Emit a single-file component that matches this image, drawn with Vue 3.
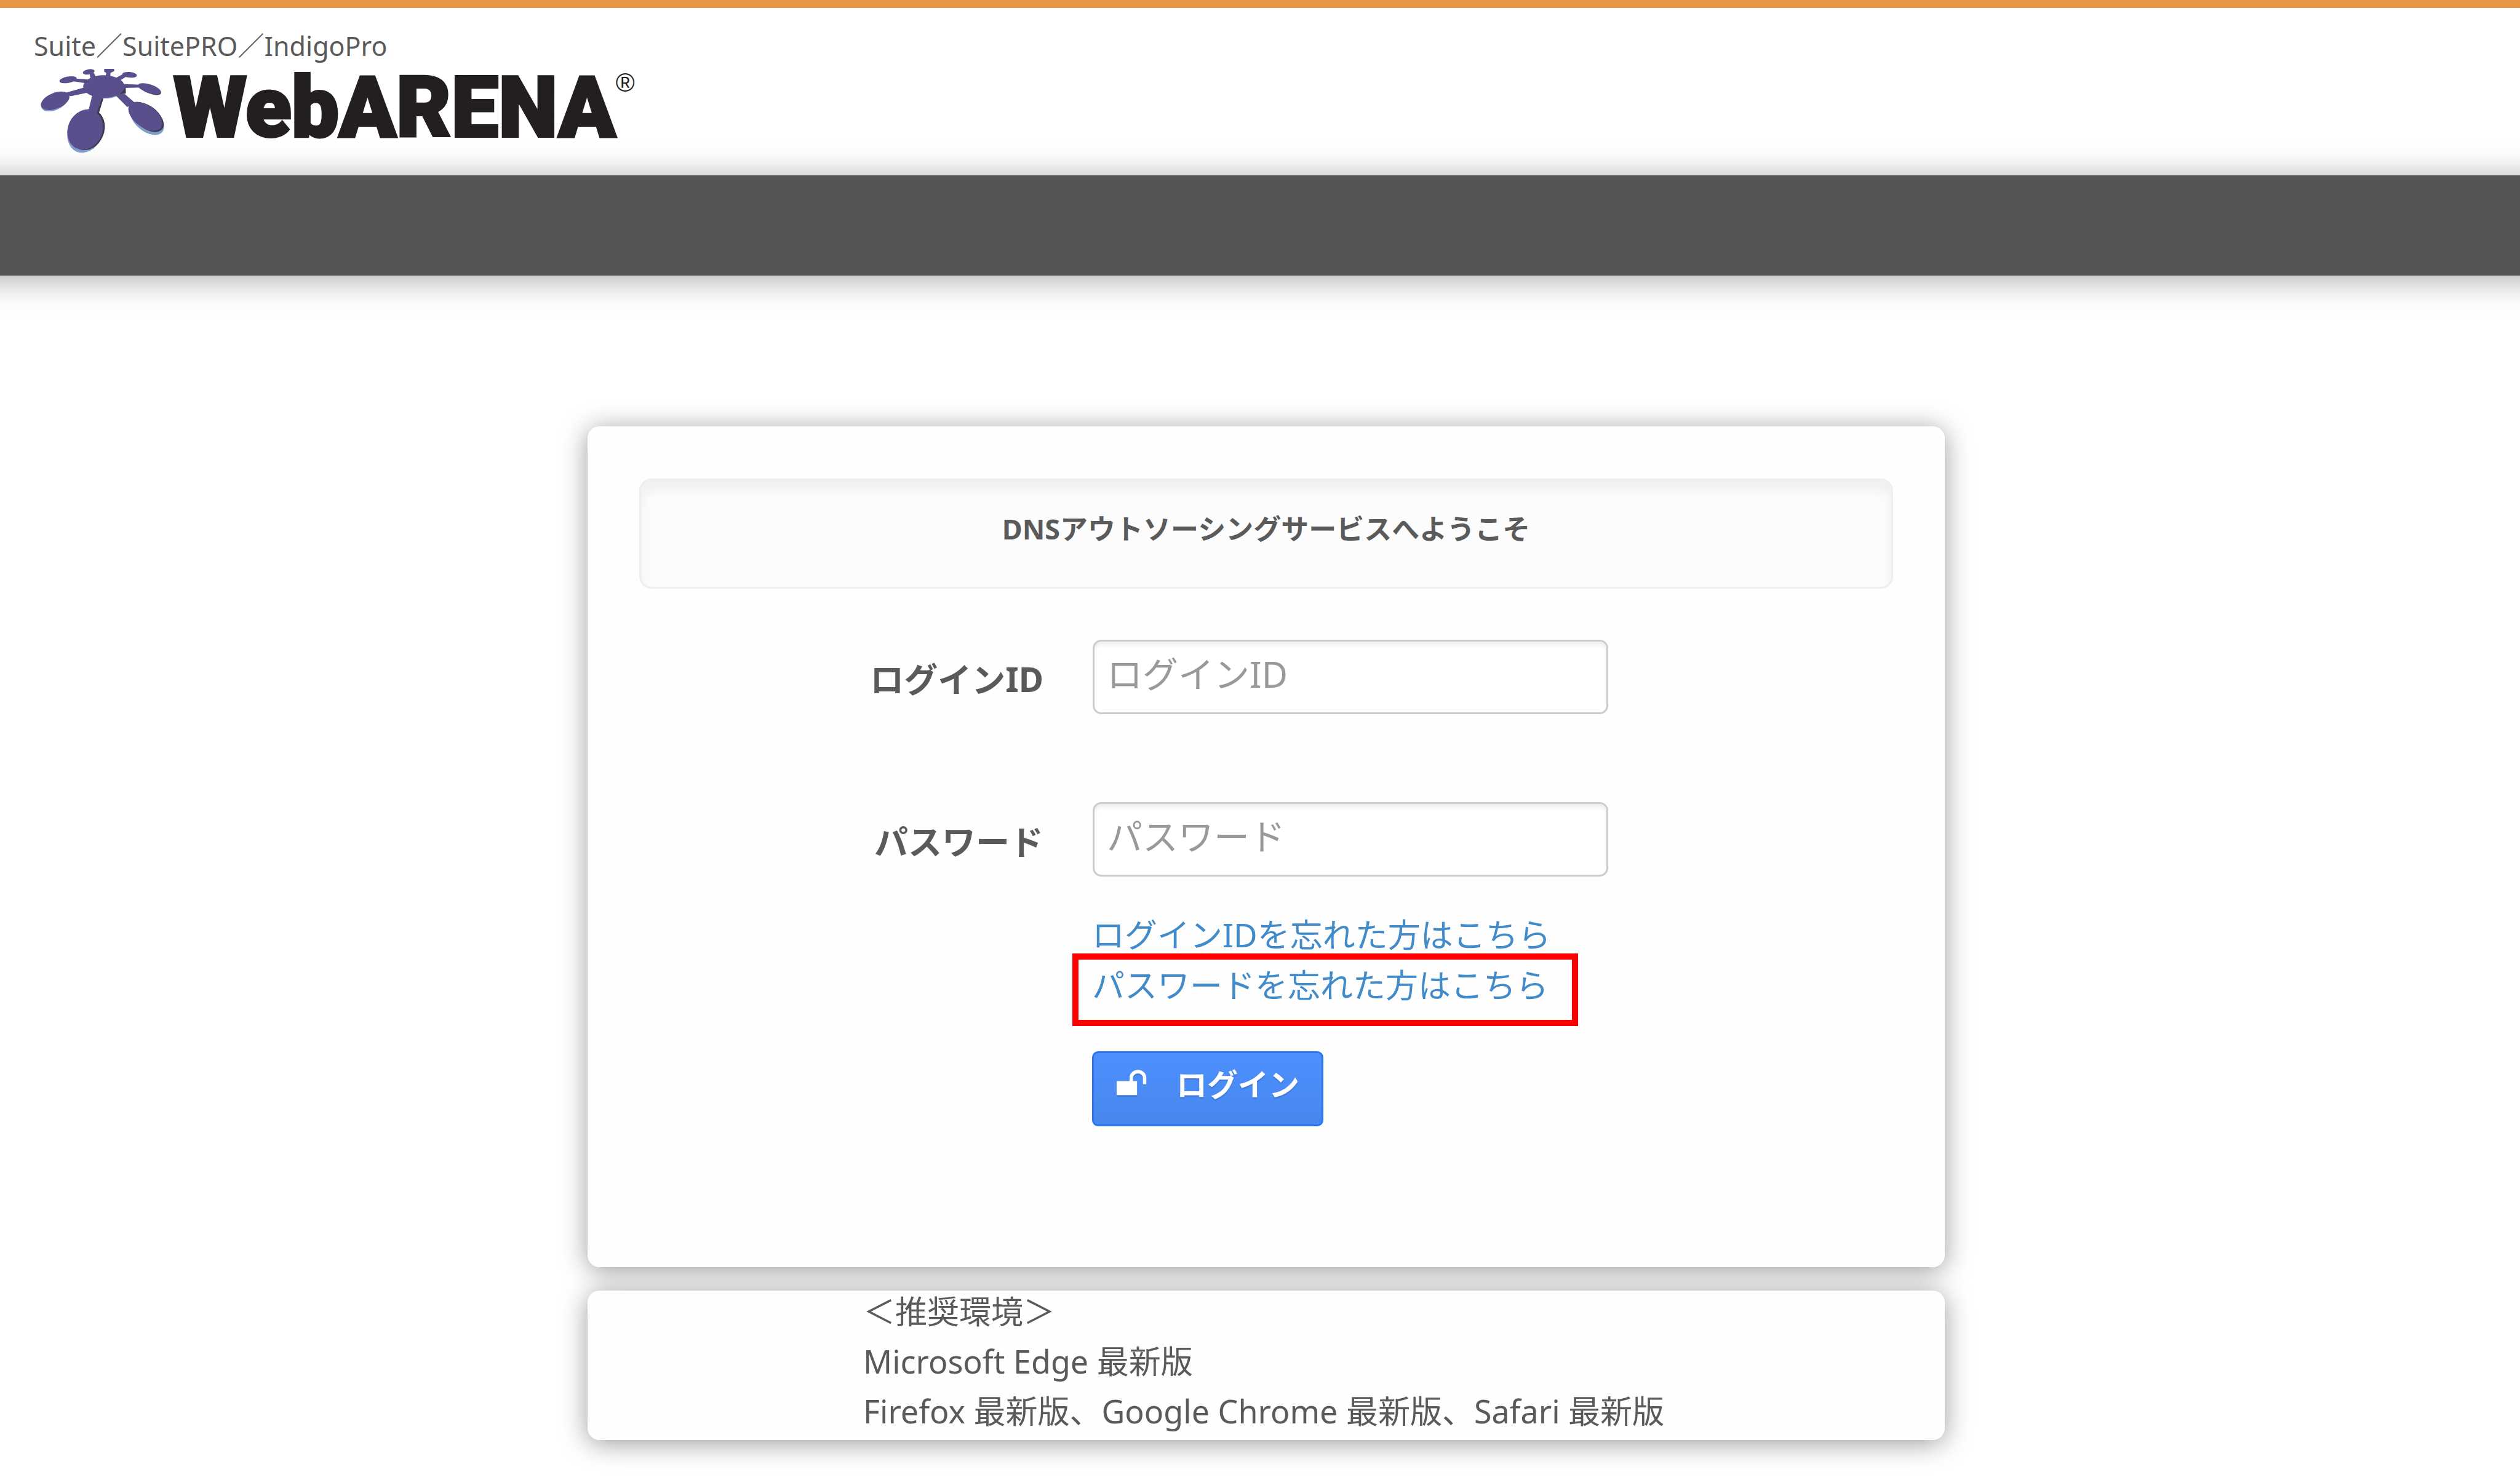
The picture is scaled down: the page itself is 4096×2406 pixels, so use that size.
<script setup>
import { ref } from 'vue'

const loginId = ref('')
const password = ref('')
const environments = [
  '＜推奨環境＞',
  'Microsoft Edge 最新版',
  'Firefox 最新版、Google Chrome 最新版、Safari 最新版',
]
</script>

<template>
  <div class="page">
    <header class="header">
      <p class="services">Suite／SuitePRO／IndigoPro</p>
      <div class="logo">
        <svg class="mark" viewBox="75 70 640 440" aria-hidden="true">
          <g fill="#7f9ccb">
            <ellipse cx="153" cy="246" rx="70" ry="38" transform="rotate(-22 153 246)" />
            <ellipse cx="308" cy="394" rx="86" ry="108" transform="rotate(24 308 394)" />
            <ellipse cx="620" cy="330" rx="100" ry="60" transform="rotate(40 620 330)" />
            <ellipse cx="410" cy="172" rx="90" ry="54" />
          </g>
          <g fill="#3d3a4c">
            <ellipse cx="318" cy="382" rx="86" ry="106" transform="rotate(22 318 382)" />
            <ellipse cx="619" cy="319" rx="98" ry="56" transform="rotate(38 619 319)" />
            <ellipse cx="637" cy="180" rx="56" ry="21" transform="rotate(20 637 180)" />
            <path d="M480 205 513 200 512 165Z" />
            <path d="M380 220 400 225 378 296 360 290Z" />
          </g>
          <g fill="#5b4e8c">
            <ellipse cx="402" cy="165" rx="104" ry="57" />
            <ellipse cx="157" cy="237" rx="76" ry="40" transform="rotate(-22 157 237)" />
            <ellipse cx="308" cy="382" rx="87" ry="104" transform="rotate(24 308 382)" />
            <ellipse cx="611" cy="315" rx="98" ry="55" transform="rotate(36 611 315)" />
            <ellipse cx="632" cy="176" rx="60" ry="22" transform="rotate(18 632 176)" />
            <ellipse cx="222" cy="131" rx="44" ry="16" transform="rotate(-10 222 131)" />
            <ellipse cx="326" cy="91" rx="30" ry="13" transform="rotate(-10 326 91)" />
            <ellipse cx="532" cy="106" rx="37" ry="14" transform="rotate(6 532 106)" />
            <path d="M404 76H454V88L436 96 434 116H410L414 96 404 90Z" />
            <path d="M330 92 348 90 362 116 334 122Z" />
            <path d="M250 124 322 130 310 148 246 138Z" />
            <path d="M458 124 502 100 516 114 482 136Z" />
            <path d="M490 152 590 156 590 170 500 172Z" />
            <path d="M308 168 206 198 234 214 318 196Z" />
            <path d="M346 200 396 214 366 300 322 296Z" />
            <path d="M456 204 506 202 560 248 520 268Z" />
          </g>
        </svg>
        <span class="wordmark">WebARENA</span>
        <span class="registered">®</span>
      </div>
    </header>
    <nav class="navbar" aria-label="メイン"></nav>

    <main class="content">
      <section class="card login">
        <h1 class="well">DNSアウトソーシングサービスへようこそ</h1>
        <form class="form" @submit.prevent>
          <div class="field">
            <label for="login-id">ログインID</label>
            <input id="login-id" v-model="loginId" type="text" placeholder="ログインID">
          </div>
          <div class="field">
            <label for="password">パスワード</label>
            <input id="password" v-model="password" type="password" placeholder="パスワード">
          </div>
          <div class="actions">
            <a href="#forgot-id">ログインIDを忘れた方はこちら</a>
            <a href="#forgot-password" class="highlighted">パスワードを忘れた方はこちら</a>
            <button type="submit">
              <svg class="lock" viewBox="205 150 160 135" aria-hidden="true">
                <path d="M208 210H310V280H208Z" fill="#fff" />
                <path d="M281 212V194a33 31 0 0 1 67 0V226" fill="none" stroke="#fff" stroke-width="17" />
              </svg>
              <span>ログイン</span>
            </button>
          </div>
        </form>
      </section>
      <section class="card environment">
        <p v-for="line in environments" :key="line">{{ line }}</p>
      </section>
    </main>
  </div>
</template>

<style>
body {
  background: #fff;
}
</style>

<style scoped>
.page {
  overflow: clip;
  border-top: 13px solid #e89744;
  font-family: "Noto Sans", "Noto Sans CJK JP", sans-serif;
  color: #5a5a5a;
}

.header {
  box-sizing: border-box;
  height: 272px;
  padding: 32px 55px 0;
}

.services {
  margin: 0;
  font-size: 43px;
  line-height: 60px;
}

.logo {
  display: flex;
  align-items: flex-start;
  padding: 5px 8px 0;
}

.mark {
  width: 207px;
  height: 142px;
  margin-right: 12px;
}

.wordmark {
  color: #231f20;
  font-family: Roboto, "Liberation Sans", sans-serif;
  font-size: 137px;
  font-weight: 900;
  line-height: 130px;
  -webkit-text-stroke: 4px #231f20;
}

.registered {
  color: #231f20;
  font-family: "Liberation Sans", Arial, sans-serif;
  font-size: 42px;
  line-height: 50px;
}

/* Runs past both edges so its shadow keeps full strength there. */
.navbar {
  height: 163px;
  margin: 0 -60px;
  background: #545454;
  box-shadow: 0 5px 50px rgba(0, 0, 0, 0.35);
}

.content {
  isolation: isolate;
  display: flex;
  flex-direction: column;
  align-items: center;
  gap: 38px;
  padding: 245px 0 60px 20px;
}

.card {
  position: relative;
  box-sizing: border-box;
  width: 100%;
  max-width: 2206px;
  border-radius: 20px;
  background: #fefefe;
}

/* The shadow sits behind every card, so neighbours stay clean. */
.card::before {
  content: "";
  position: absolute;
  inset: 0;
  z-index: -1;
  border-radius: 20px;
  box-shadow: 0 5px 44px rgba(0, 0, 0, 0.4);
}

.login {
  padding: 85px 84px 229px;
}

.well {
  margin: 0 0 83px;
  padding: 49px 20px 64px;
  border: 3px solid #eee;
  border-radius: 20px;
  background: #fcfcfc;
  box-shadow: inset 0 16px 20px rgba(0, 0, 0, 0.05);
  font-size: 45px;
  font-weight: 700;
  line-height: 60px;
  text-align: center;
}

.field {
  display: grid;
  grid-template-columns: 657px 838px;
  column-gap: 80px;
  align-items: center;
}

.field + .field {
  margin-top: 143px;
}

label {
  font-size: 55px;
  font-weight: 700;
  text-align: right;
}

input {
  box-sizing: border-box;
  width: 100%;
  height: 121px;
  padding: 0 20px 10px;
  border: 3px solid #ccc;
  border-radius: 14px;
  background: #fff;
  box-shadow: inset 0 5px 6px rgba(0, 0, 0, 0.07);
  color: #555;
  font-family: inherit;
  font-size: 58px;
}

input::placeholder {
  color: #999;
  opacity: 1;
}

.actions {
  display: flex;
  flex-direction: column;
  align-items: flex-start;
  margin: 54px 0 0 736px;
}

a {
  position: relative;
  color: #428bca;
  font-size: 53px;
  line-height: 82px;
  text-decoration: none;
}

.highlighted::after {
  content: "";
  position: absolute;
  inset: -11px -48px -25px -32px;
  border: 10px solid #f00;
}

button {
  display: flex;
  align-items: center;
  gap: 46px;
  height: 122px;
  margin-top: 66px;
  padding: 0 36px 20px;
  border: 3px solid #2a75ee;
  border-radius: 10px;
  background: linear-gradient(#4d90fe, #4787ed);
  color: #fff;
  font-family: inherit;
  font-size: 50px;
  font-weight: 700;
  text-shadow: 0 3px 0 rgba(0, 0, 0, 0.1);
}

.lock {
  width: 52px;
  height: 44px;
  filter: drop-shadow(0 3px 0 rgba(0, 0, 0, 0.1));
}

.environment {
  display: flex;
  flex-direction: column;
  gap: 14px;
  padding: 0 0 14px 448px;
}

.environment p {
  margin: 0;
  font-size: 52px;
  line-height: 67px;
}
</style>
